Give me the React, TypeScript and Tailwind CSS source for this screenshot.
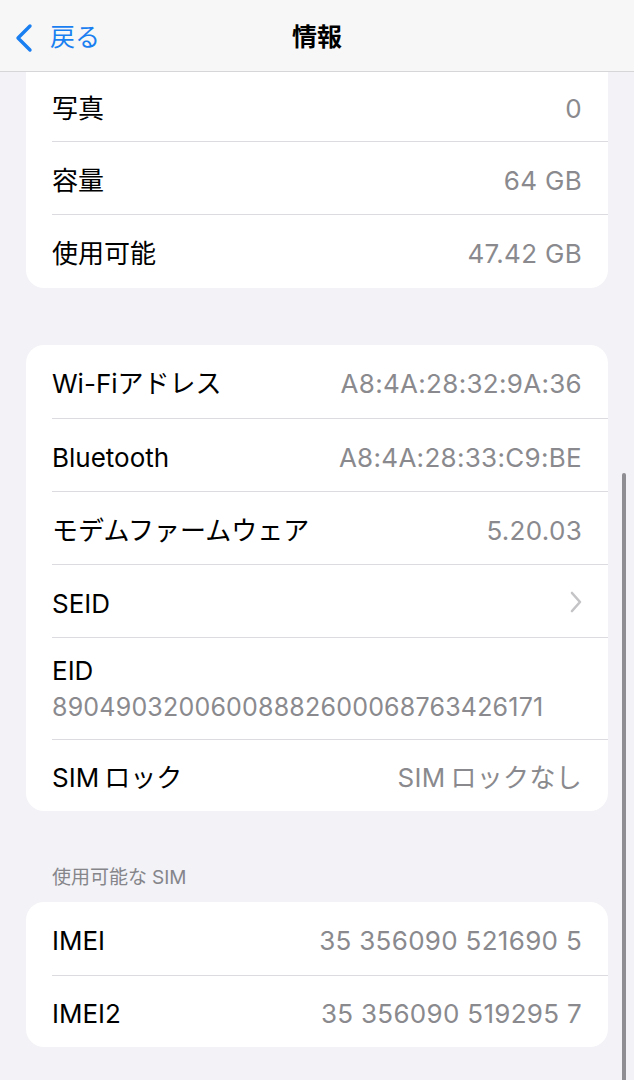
type Row = {
  label: React.ReactNode;
  value?: React.ReactNode;
  chevron?: boolean;
};

const font = {
  fontFamily: '"Inter", "Noto Sans CJK JP", sans-serif',
};

const storageRows: Row[] = [
  { label: "写真", value: "0" },
  { label: "容量", value: "64 GB" },
  { label: "使用可能", value: "47.42 GB" },
];

const networkRows: Row[] = [
  { label: "Wi-Fiアドレス", value: "A8:4A:28:32:9A:36" },
  { label: "Bluetooth", value: "A8:4A:28:33:C9:BE" },
  { label: "モデムファームウェア", value: "5.20.03" },
  { label: "SEID", chevron: true },
];

const simRows: Row[] = [
  { label: "IMEI", value: "35 356090 521690 5" },
  { label: "IMEI2", value: "35 356090 519295 7" },
];

function InfoRow({ row, first, height = "h-[73px]" }: { row: Row; first?: boolean; height?: string }) {
  return (
    <div className={`ml-[26px] flex items-center justify-between pt-[4px] pr-[26px] ${height} ${first ? "" : "border-t border-[#dcdce0]"}`}>
      <span className="text-[26px] text-black">{row.label}</span>
      {row.chevron ? (
        <svg width="14" height="24" viewBox="0 0 14 24" fill="none" className="mr-[-1px] mb-[2px]">
          <path d="M3 3 L11 12 L3 21" stroke="#c4c4c7" strokeWidth="2.6" strokeLinecap="round" strokeLinejoin="round" />
        </svg>
      ) : (
        <span className="text-[26px] tracking-[0.3px] text-[#8a8a8e]">{row.value}</span>
      )}
    </div>
  );
}

function SimWord({ rest }: { rest: string }) {
  return (
    <>
      SIM<span className="ml-[5px]">{rest}</span>
    </>
  );
}

export default function App() {
  return (
    <div className="relative h-[1080px] w-[634px] overflow-hidden bg-[#f2f2f7]" style={font}>
      <div className="flex h-[72px] items-center border-b border-[#d6d6d8] bg-[#f7f7f7] pt-[4px]">
        <div className="flex w-[120px] items-center pl-[14px] text-[#1a7ff0]">
          <svg width="20" height="30" viewBox="0 0 20 30" fill="none">
            <path d="M16 3 L4 15 L16 27" stroke="#1a7ff0" strokeWidth="3.4" strokeLinecap="round" strokeLinejoin="round" />
          </svg>
          <span className="ml-[16px] text-[25px]">戻る</span>
        </div>
        <div className="flex-1 text-center text-[25px] font-bold text-black">情報</div>
        <div className="w-[120px]" />
      </div>

      <div className="mx-[26px] rounded-b-[18px] bg-white">
        {storageRows.map((row, index) => (
          <InfoRow
            key={index}
            row={row}
            first={index === 0}
            height={index === 0 ? "h-[69px]" : index === 2 ? "h-[74px]" : "h-[73px]"}
          />
        ))}
      </div>

      <div className="mx-[26px] mt-[57px] rounded-[18px] bg-white">
        {networkRows.map((row, index) => (
          <InfoRow key={index} row={row} first={index === 0} />
        ))}
        <div className="ml-[26px] flex h-[102px] flex-col justify-center border-t border-[#dcdce0] pt-[2px] pr-[26px]">
          <span className="text-[26px] leading-[34px] text-black">EID</span>
          <span className="text-[25px] leading-[38px] tracking-[0.2px] text-[#8a8a8e]">
            89049032006008882600068763426171
          </span>
        </div>
        <InfoRow row={{ label: <SimWord rest="ロック" />, value: <SimWord rest="ロックなし" /> }} height="h-[72px]" />
      </div>

      <div className="px-[52px] pt-[56px] pb-[13px] text-[19px] leading-[22px] text-[#85858a]">
        使用可能な<span className="ml-[5px]">SIM</span>
      </div>

      <div className="mx-[26px] rounded-[18px] bg-white">
        {simRows.map((row, index) => (
          <InfoRow key={index} row={row} first={index === 0} height={index === 0 ? "h-[73px]" : "h-[72px]"} />
        ))}
      </div>

      <div className="absolute right-[8px] top-[473px] h-[620px] w-[4px] rounded-full bg-[#8e8e93]" />
    </div>
  );
}
